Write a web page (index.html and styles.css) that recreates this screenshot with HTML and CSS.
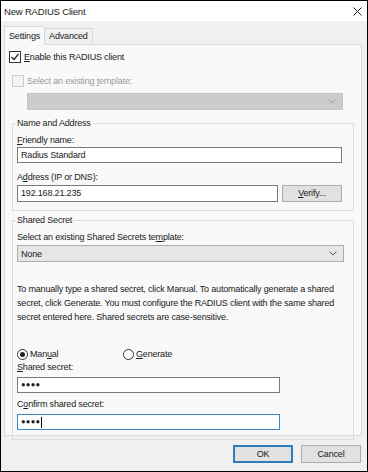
FILE: index.html
```html
<!DOCTYPE html>
<html lang="en">
<head>
    <meta charset="UTF-8">
    <title>New RADIUS Client</title>
    <link rel="stylesheet" href="styles.css">
</head>
<body>

    <div class="window">
        <div class="titlebar">
            <span>New RADIUS Client</span>
            <svg class="close" width="9" height="9" viewBox="0 0 9 9">
                <path d="M0.5 0.5 L8.5 8.5 M8.5 0.5 L0.5 8.5" stroke="#222" stroke-width="1"/>
            </svg>
        </div>

        <div class="tabs">
            <div class="tab active">Settings</div>
            <div class="tab">Advanced</div>
        </div>

        <div class="panel">
            <div class="check-row enable">
                <span class="box checked">
                    <svg width="10" height="10" viewBox="0 0 10 10">
                        <path d="M1.5 5 L4 7.5 L8.5 2" fill="none" stroke="#222" stroke-width="1.2"/>
                    </svg>
                </span>
                <span><u>E</u>nable this RADIUS client</span>
            </div>

            <div class="check-row disabled">
                <span class="box"></span>
                <span>Select an existing <u>t</u>emplate:</span>
            </div>

            <div class="select select-disabled">
                <span></span>
                <svg width="8" height="5" viewBox="0 0 8 5">
                    <path d="M0.5 0.5 L4 4 L7.5 0.5" fill="none" stroke="#999" stroke-width="1"/>
                </svg>
            </div>

            <fieldset class="group name-group">
                <legend>Name and Address</legend>
                <div class="label"><u>F</u>riendly name:</div>
                <div class="input wide">Radius Standard</div>
                <div class="label spaced">A<u>d</u>dress (IP or DNS):</div>
                <div class="input-row">
                    <div class="input address">192.168.21.235</div>
                    <div class="button verify"><u>V</u>erify...</div>
                </div>
            </fieldset>

            <fieldset class="group secret-group">
                <legend>Shared Secret</legend>
                <div class="label">Select an existing Shared Secrets te<u>m</u>plate:</div>
                <div class="select">
                    <span>None</span>
                    <svg width="8" height="5" viewBox="0 0 8 5">
                        <path d="M0.5 0.5 L4 4 L7.5 0.5" fill="none" stroke="#555" stroke-width="1"/>
                    </svg>
                </div>

                <p class="note">
                    To manually type a shared secret, click Manual. To automatically generate a shared
                    secret, click Generate. You must configure the RADIUS client with the same shared
                    secret entered here. Shared secrets are case-sensitive.
                </p>

                <div class="radios">
                    <div class="radio-item manual">
                        <span class="radio on"></span>
                        <span>Man<u>u</u>al</span>
                    </div>
                    <div class="radio-item">
                        <span class="radio"></span>
                        <span><u>G</u>enerate</span>
                    </div>
                </div>

                <div class="label"><u>S</u>hared secret:</div>
                <div class="input secret">&#9679;&#9679;&#9679;&#9679;</div>
                <div class="label">C<u>o</u>nfirm shared secret:</div>
                <div class="input secret focused">&#9679;&#9679;&#9679;&#9679;<span class="caret"></span></div>
            </fieldset>
        </div>

        <div class="footer">
            <div class="button default">OK</div>
            <div class="button">Cancel</div>
        </div>
    </div>

</body>
</html>
```

FILE: styles.css
```css
body {
    margin: 0;
    font-family: 'Liberation Sans', Arial, sans-serif;
    font-size: 9px;
    letter-spacing: -0.18px;
    color: #1a1a1a;
    background-color: #fff;
}
u {
    text-decoration-thickness: 1px;
    text-underline-offset: 1px;
}
.window {
    box-sizing: border-box;
    width: 368px;
    height: 472px;
    border: 1px solid #000;
    background-color: #f0f0f0;
    display: flex;
    flex-direction: column;
}
.titlebar {
    height: 20px;
    background-color: #fff;
    display: flex;
    justify-content: space-between;
    align-items: center;
    padding: 0 5px 0 3px;
    font-size: 9.5px;
    color: #222;
}
.tabs {
    display: flex;
    align-items: flex-end;
    margin-top: 5px;
    padding-left: 3px;
}
.tab {
    height: 15px;
    line-height: 15px;
    padding: 0 4px;
    border: 1px solid #d9d9d9;
    border-bottom: none;
    background-color: #f0f0f0;
}
.tab.active {
    height: 18px;
    line-height: 18px;
    padding: 0 4px;
    background-color: #f9f9f9;
    margin-bottom: -1px;
    position: relative;
    border-right: none;
}
.panel {
    box-sizing: border-box;
    height: 392px;
    margin: 0 5px 0 3px;
    border: 1px solid #d9d9d9;
    background-color: #f9f9f9;
}
.check-row {
    display: flex;
    align-items: center;
    gap: 3px;
    height: 12px;
}
.check-row.enable {
    margin: 6px 0 0 4px;
}
.check-row.disabled {
    margin: 12px 0 0 7px;
    color: #9a9a9a;
}
.box {
    box-sizing: border-box;
    width: 12px;
    height: 12px;
    border: 1px solid #333;
    background-color: #fff;
    display: flex;
    align-items: center;
    justify-content: center;
}
.check-row.disabled .box {
    border-color: #cfcfcf;
    background-color: #f4f4f4;
}
.select {
    box-sizing: border-box;
    height: 17px;
    border: 1px solid #adadad;
    background-color: #e6e6e6;
    display: flex;
    justify-content: space-between;
    align-items: center;
    padding: 0 6px 0 3px;
}
.select-disabled {
    width: 316px;
    margin: 6px 0 0 22px;
    background-color: #cccccc;
    border-color: #c4c4c4;
}
.group {
    margin: 0 0 0 7px;
    width: 342px;
    box-sizing: border-box;
    border: 1px solid #dcdcdc;
    padding: 0 4px 8px 4px;
    min-width: 0;
}
.group legend {
    padding: 0 1px;
    margin-left: -1px;
    line-height: 12px;
}
.name-group {
    margin-top: 7px;
}
.secret-group {
    margin-top: 3px;
    padding-bottom: 9px;
}
.label {
    line-height: 12px;
    margin-top: 5px;
}
.label.spaced {
    margin-top: 8px;
}
.input {
    box-sizing: border-box;
    height: 16px;
    line-height: 14px;
    border: 1px solid #7a7a7a;
    background-color: #fff;
    padding-left: 3px;
    margin-top: 1px;
}
.input.wide {
    width: 325px;
}
.input-row {
    display: flex;
    gap: 4px;
    margin-top: 2px;
}
.input.address {
    width: 261px;
    height: 17px;
    margin-top: 0;
}
.button {
    box-sizing: border-box;
    width: 60px;
    height: 18px;
    line-height: 16px;
    text-align: center;
    border: 1px solid #adadad;
    background-color: #e1e1e1;
}
.button.verify {
    height: 17px;
    line-height: 15px;
}
.secret-group .select {
    width: 327px;
    margin-top: 2px;
}
.note {
    margin: 20px 0 0 0;
    line-height: 14px;
    width: 332px;
}
.radios {
    display: flex;
    margin-top: 24px;
    height: 12px;
}
.radio-item {
    display: flex;
    align-items: center;
    gap: 2px;
}
.radio-item.manual {
    width: 106px;
}
.radio {
    box-sizing: border-box;
    width: 11px;
    height: 11px;
    border: 1px solid #333;
    border-radius: 50%;
    background-color: #fff;
    display: flex;
    align-items: center;
    justify-content: center;
}
.radio.on::after {
    content: "";
    width: 5px;
    height: 5px;
    border-radius: 50%;
    background-color: #222;
}
.radios + .label {
    margin-top: 1px;
}
.input.secret {
    width: 263px;
    margin-top: 4px;
    font-size: 7.5px;
    letter-spacing: 0.3px;
    display: flex;
    align-items: center;
}
.input.focused {
    border-color: #3c88c7;
}
.caret {
    width: 1px;
    height: 11px;
    background-color: #000;
    margin-left: 1px;
}
.footer {
    display: flex;
    justify-content: flex-end;
    gap: 8px;
    padding: 9px 6px 0 0;
}
.button.default {
    border: 2px solid #2f7bbf;
    line-height: 14px;
}
```
